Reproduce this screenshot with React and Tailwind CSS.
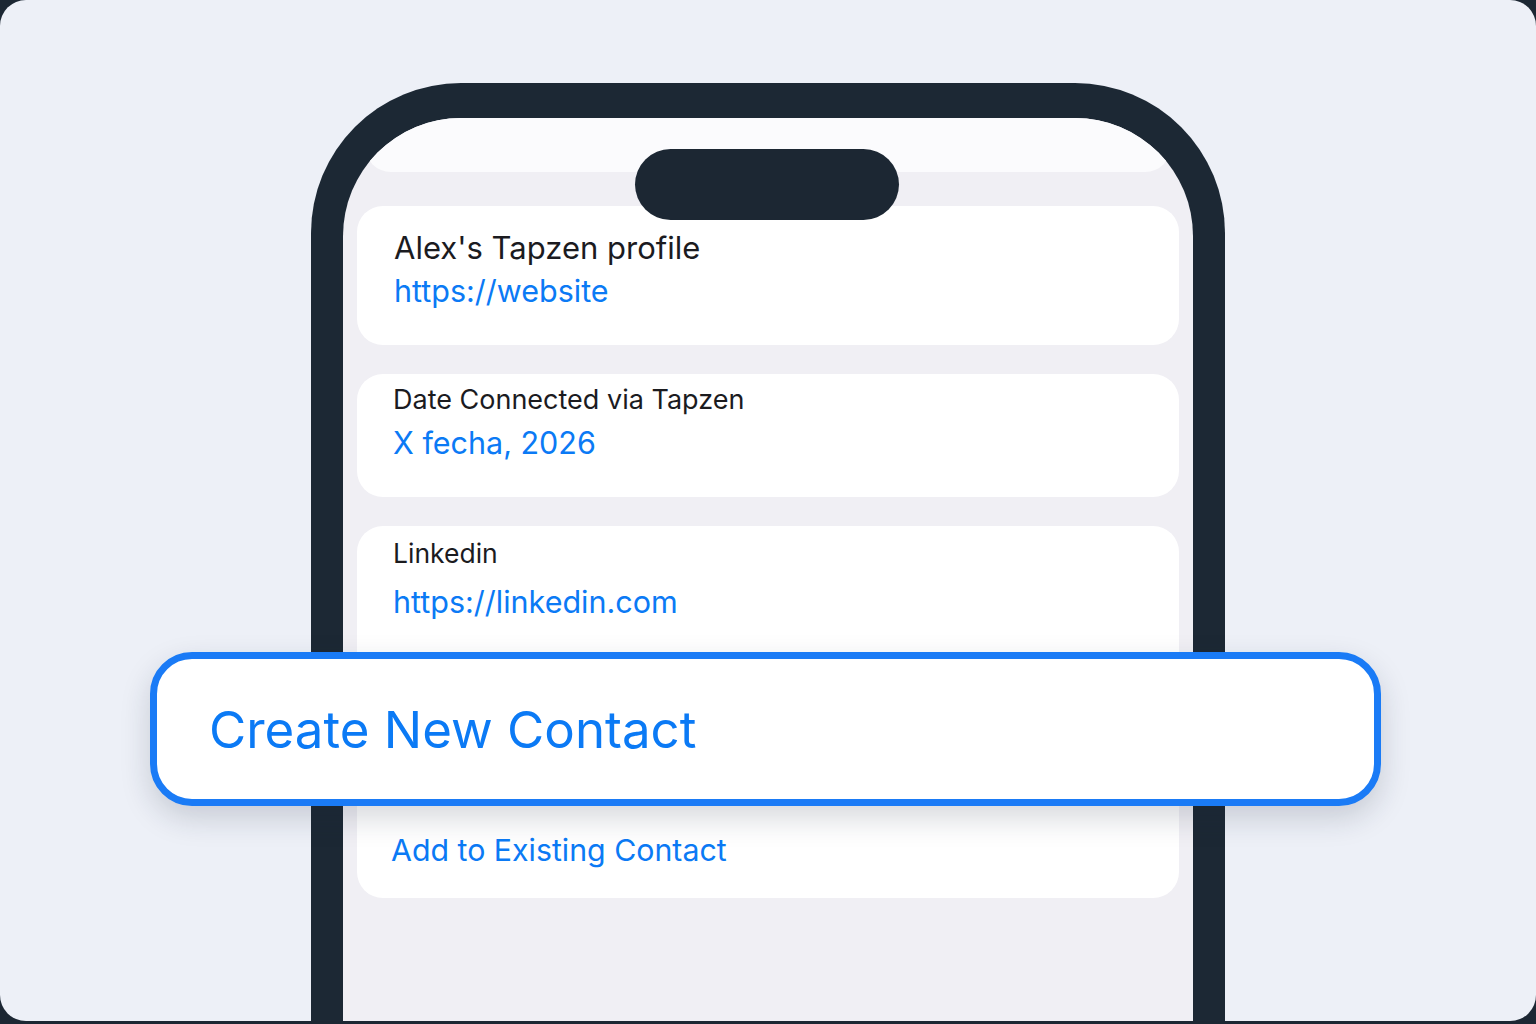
const Card = ({ className = "", children }) => (
  <div className={`rounded-[26px] bg-white ${className}`}>{children}</div>
);

const App = () => {
  return (
    <div className="w-[1536px] h-[1024px] overflow-hidden bg-[#1c2733]" style={{ fontFamily: "Inter, 'Noto Sans', sans-serif" }}>
      <div className="relative h-[1021px] overflow-hidden rounded-[26px] bg-[#edf0f7]">
        <div className="flex justify-center pt-[83px]">
          <div className="h-[1100px] w-[914px] rounded-t-[150px] bg-[#1c2834] px-[32px] pt-[35px]">
            <div className="relative h-full overflow-hidden rounded-t-[118px] bg-[#f0eff4]">
              {/* island */}
              <div className="absolute left-[292px] top-[31px] z-10 h-[71px] w-[264px] rounded-full bg-[#1c2733]"></div>

              <div className="flex flex-col px-[14px]">
                <div className="mx-[8px] h-[54px] rounded-b-[26px] bg-[#fbfbfd]"></div>

                <Card className="mt-[34px] h-[139px] px-[37px] pt-[22px]">
                  <p className="text-[31px] leading-[40px] text-[#1b1b1f]">Alex's Tapzen profile</p>
                  <p className="mt-[3px] text-[30.5px] leading-[40px] text-[#0b7af5]">https://website</p>
                </Card>

                <Card className="mt-[29px] h-[123px] px-[36px] pt-[9px]">
                  <p className="text-[27px] leading-[34px] text-[#1b1b1f]">Date Connected via Tapzen</p>
                  <p className="mt-[6px] text-[30.5px] leading-[40px] text-[#0b7af5]">X fecha, 2026</p>
                </Card>

                <Card className="mt-[29px] h-[372px] px-[36px] pt-[10px]">
                  <p className="text-[26.5px] leading-[34px] text-[#1b1b1f]">Linkedin</p>
                  <p className="mt-[12px] text-[30.5px] leading-[40px] text-[#0b7af5]">https://linkedin.com</p>
                  <p className="-ml-[2px] mt-[208px] text-[30.3px] leading-[40px] text-[#0b7af5]">Add to Existing Contact</p>
                </Card>
              </div>
            </div>
          </div>
        </div>

        {/* highlighted action */}
        <div className="absolute left-[150px] top-[652px] flex h-[154px] w-[1231px] items-center rounded-[42px] border-[7px] border-[#1a7bf6] bg-white pl-[52px] shadow-[0_12px_30px_rgba(30,40,60,0.18)]">
          <span className="text-[51px] leading-none text-[#0b7af5]">Create New Contact</span>
        </div>
      </div>
    </div>
  );
};

export default App;
